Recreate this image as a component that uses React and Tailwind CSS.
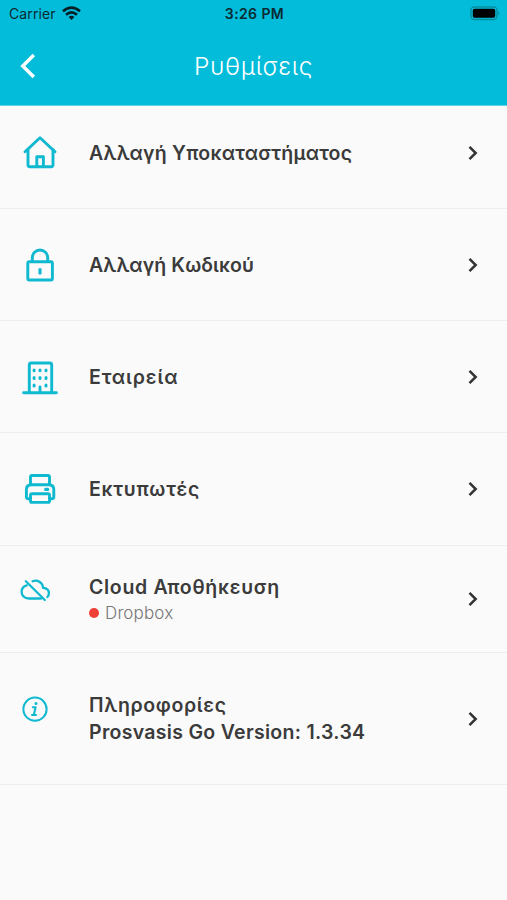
import React from 'react'

const iconProps = {
  width: 36,
  height: 36,
  viewBox: '0 0 36 36',
  fill: 'none',
  stroke: 'currentColor',
  strokeWidth: 2.9,
  strokeLinecap: 'round',
  strokeLinejoin: 'round',
}

const HomeIcon = () => (
  <svg {...iconProps}>
    <path d="M3 16.7 18 2.7l15 14" />
    <path d="M6 15v14.7q0 2 2 2h21q2 0 2-2V15" />
    <path d="M14.8 31V21.7h6.6V31" />
  </svg>
)

const LockIcon = () => (
  <svg {...iconProps}>
    <rect x="5.8" y="14.8" width="24.6" height="18.2" rx="1.5" />
    <path d="M10.3 14.5v-3.8a7.7 7.7 0 0 1 15.4 0v3.8" />
    <path d="M18 22.5v3.6" strokeWidth="3.2" />
  </svg>
)

const BuildingIcon = () => (
  <svg {...iconProps}>
    <path d="M1.6 33.7h32.8M7.3 33V6q0-2 2-2h18.4q2 0 2 2v27M18 33v-5" />
    <path d="M12.1 11v.8M18 11v.8M24 11v.8M12.1 18.6v.8M18 18.6v.8M24 18.6v.8M12.1 26v1M24 26v1" strokeWidth="3" />
  </svg>
)

const PrinterIcon = () => (
  <svg {...iconProps}>
    <path d="M8.5 13.5V6q0-1.5 1.5-1.5h16q1.5 0 1.5 1.5v7.5" />
    <path d="M8.5 27.7H6.4q-2 0-2-2v-7q0-5 5-5h17.4q5 0 5 5v7q0 2-2 2h-2.1" />
    <rect x="8.5" y="22.8" width="19" height="8.6" rx="1.5" />
    <path d="M23.7 18.4h2" strokeWidth="3.2" />
  </svg>
)

const CloudOffIcon = () => (
  <svg width="31" height="31" viewBox="0 0 31 31" fill="none" stroke="currentColor" strokeWidth="2.3" strokeLinecap="round">
    <path d="m5.8 6.3 19 18.7" />
    <path d="M6.8 10.4C3.8 11.2 1.6 13.4 1.6 16.8c0 4 3.2 6.7 7.2 6.7h12.4" />
    <path d="M12.6 6.3C17.5 4.4 22.4 7.4 23.2 12.8c3 .2 5.7 2 5.7 5.5 0 1.6-.5 2.7-1.5 3.7" />
  </svg>
)

const InfoIcon = () => (
  <svg width="26" height="26" viewBox="0 0 26 26" fill="none" stroke="currentColor" strokeLinecap="round" strokeLinejoin="round">
    <circle cx="13" cy="13.2" r="11.6" strokeWidth="2" />
    <path d="M10.8 11.3h2.8l-1.7 7.2M10 19h4" strokeWidth="2.1" />
    <circle cx="14" cy="7.5" r="1.5" fill="currentColor" stroke="none" />
  </svg>
)

const Chevron = () => (
  <svg className="ml-auto mr-7" width="12" height="16" viewBox="0 0 12 16" fill="none" stroke="#333" strokeWidth="2.5">
    <path d="M2.5 1.8 8.7 8l-6.2 6.2" />
  </svg>
)

function Row({ icon, className, iconClass = 'pl-[22px]', children }) {
  return (
    <li className={`flex items-center border-b border-[#eeeeee] text-[#3b3b3b] ${className}`}>
      <div className={`w-[89px] shrink-0 text-[#0fb9d0] ${iconClass}`}>{icon}</div>
      <div className="whitespace-nowrap pt-px text-[19.5px] leading-[27px] font-semibold">{children}</div>
      <Chevron />
    </li>
  )
}

function StatusBar() {
  return (
    <div className="grid h-[27px] grid-cols-3 items-center pl-[9px] pr-[7px] text-[#0b2a31]">
      <div className="flex items-center gap-[6px]">
        <span className="text-[14px] tracking-[0.1px]">Carrier</span>
        <svg width="19" height="15" viewBox="0 0 19 15" fill="none" stroke="#061e24" strokeWidth="2.6">
          <path d="M1 5.3Q9.5-2 18 5.3" />
          <path d="M4 8.7q5.5-4.6 11 0" />
          <path d="M6.6 11 9.5 14l2.9-3q-2.9-2.3-5.8 0Z" fill="#061e24" stroke="none" />
        </svg>
      </div>
      <div className="text-center text-[14px] font-semibold tracking-[0.4px]">3:26 PM</div>
      <svg className="ml-auto" width="30" height="15" viewBox="0 0 30 15">
        <rect x="1" y="1" width="26" height="12.5" rx="3.5" fill="none" stroke="#078ea0" strokeWidth="1.4" />
        <rect x="2.8" y="2.8" width="22.4" height="9" rx="1.8" fill="#000" />
        <path d="M28.2 5q2 2.2 0 4.4Z" fill="#078ea0" />
      </svg>
    </div>
  )
}

export default function App() {
  return (
    <div className="h-[900px] w-[507px] overflow-hidden bg-[#fafafa] font-['Inter',sans-serif]">
      <header className="h-[106px] border-b border-[#5fd3e3] bg-[#02bcda]">
        <StatusBar />
        <div className="grid h-[78px] grid-cols-[60px_1fr_60px] items-center">
          <button className="pl-[19px]" aria-label="Back">
            <svg width="18" height="26" viewBox="0 0 18 26" fill="none" stroke="#fff" strokeWidth="3.5">
              <path d="M14.8 2 3.8 13l11 11" />
            </svg>
          </button>
          <h1 className="text-center text-[24.5px] font-light tracking-[0.6px] text-white">Ρυθμίσεις</h1>
        </div>
      </header>

      <ul>
        <Row icon={<HomeIcon />} className="h-[103px] pb-[9px]">
          <span className="tracking-[0.2px]">Αλλαγή Υποκαταστήματος</span>
        </Row>
        <Row icon={<LockIcon />} className="h-[112px]">
          <span className="tracking-[0.1px]">Αλλαγή Κωδικού</span>
        </Row>
        <Row icon={<BuildingIcon />} className="h-[112px]">
          <span className="tracking-[0.9px]">Εταιρεία</span>
        </Row>
        <Row icon={<PrinterIcon />} className="h-[113px]">
          <span className="tracking-[0.7px]">Εκτυπωτές</span>
        </Row>
        <Row icon={<CloudOffIcon />} iconClass="pl-[20px] pb-[18px]" className="h-[107px]">
          <div className="tracking-[0.7px]">Cloud Αποθήκευση</div>
          <div className="flex items-center gap-[6px] text-[17px] leading-[24px] font-light text-[#777]">
            <span className="h-[10px] w-[10px] rounded-full bg-[#f04136]" />
            <span className="tracking-[0.15px]">Dropbox</span>
          </div>
        </Row>
        <Row icon={<InfoIcon />} iconClass="pl-[22px] pb-[20px]" className="h-[132px]">
          <div className="tracking-[0.65px]">Πληροφορίες</div>
          <div className="tracking-[0.3px]">Prosvasis Go Version: 1.3.34</div>
        </Row>
      </ul>
    </div>
  )
}
